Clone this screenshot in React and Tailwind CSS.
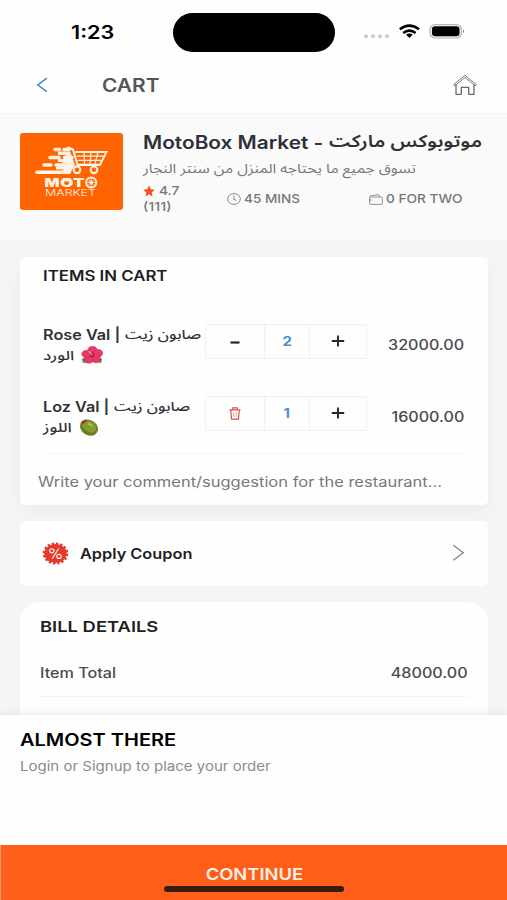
import clsx from 'clsx';

const items = [
  { id: 1, name: 'Rose Val |', nameAr: 'صابون زيت', kind: 'الورد', emoji: 'flower', qty: 2, price: '32000.00' },
  { id: 2, name: 'Loz Val |', nameAr: 'صابون زيت', kind: 'اللوز', emoji: 'olive', qty: 1, price: '16000.00' },
];

// wide text: the glyphs are stretched, the box keeps its natural width
const Wide = ({ className, children }) => (
  <span className={clsx('inline-block whitespace-nowrap', className)}>{children}</span>
);

const StatusBar = () => (
  <div className="flex h-16 shrink-0 items-center">
    <div className="w-[173px] pl-[71px] text-[18px] font-semibold text-black">
      <Wide className="origin-left scale-x-[1.2]">1:23</Wide>
    </div>
    <div className="h-[39px] w-[162px] rounded-full bg-black" />
    <svg className="ml-[28px]" width="102" height="20" viewBox="0 0 102 20">
      <g fill="#c9c9c9">
        <circle cx="3" cy="14.2" r="2" />
        <circle cx="10" cy="14.2" r="2" />
        <circle cx="17" cy="14.2" r="2" />
        <circle cx="24" cy="14.2" r="2" />
      </g>
      <g fill="none" stroke="#000" strokeWidth="2.5">
        <path d="M36.8 7.3Q46.4 -.1 56 7.3" />
        <path d="M40.2 10.9Q46.4 6.4 52.6 10.9" />
      </g>
      <path d="M43 12.5Q46.4 10.7 49.8 12.5L46.4 16Z" />
      <rect x="67" y="2.5" width="31.5" height="13.5" rx="5" fill="#eee" stroke="#b5b5b5" strokeWidth="1.2" />
      <rect x="69" y="4.3" width="27.5" height="10" rx="3.2" />
      <path d="M100 7.5Q102 9.2 100 11Z" fill="#777" />
    </svg>
  </div>
);

const Header = () => (
  <div className="flex h-[50px] shrink-0 items-center border-b border-[#f3f3f3] pb-[7px]">
    <svg className="ml-[36px]" width="12" height="16" viewBox="0 0 12 16" fill="none" stroke="#3b8ac4" strokeWidth="1.5">
      <path d="M10.8 1.2L1.8 8L10.8 14.6" />
    </svg>
    <div className="ml-[54px] flex-1 text-[18px] font-semibold text-[#555]">
      <Wide className="origin-left scale-x-[1.16]">CART</Wide>
    </div>
    <svg className="mr-[29px]" width="26" height="22" viewBox="0 0 26 22" fill="none" stroke="#6b6b6b" strokeWidth="1.3" strokeLinejoin="round">
      <path d="M1.5 10.7L13 1.3L24.5 10.7L23 11.6L13 3.5L3 11.6Z" strokeWidth=".9" />
      <path d="M4 10.5V20.3H9.3V13.3H16.7V20.3H22V10.5" />
    </svg>
  </div>
);

const Logo = () => (
  <svg className="shrink-0 rounded-[3px]" width="103" height="77" viewBox="0 0 103 77">
    <rect width="103" height="77" fill="#ff6400" />
    <g fill="none" stroke="#fff3e6" strokeLinecap="round">
      <path d="M35 16.5H39.5M44 16.5H49" strokeWidth="3.4" />
      <path d="M30 24.5H39M44.5 24.5H52" strokeWidth="3.4" />
      <path d="M24 32H31M36 32H50" strokeWidth="3.4" />
      <path d="M17 39.2H49" strokeWidth="3.4" />
      <path d="M48 14.5L53 16.5L57.5 32H79" strokeWidth="2" />
      <path d="M56 19H86.5L80 31.8H58" strokeWidth="1.9" />
      <path d="M57 23.2H83.5M58 27.4H81.5M64 19L64.5 31M71 19L70 31M78 19L75 31" strokeWidth="1.2" />
    </g>
    <path d="M38 18.5H50L55 32L52 37L50 41H38L44 36.5H36V33.5H46L42 29H38V26H44L46 22H38Z" fill="#fff3e6" />
    <circle cx="57" cy="36.8" r="3.3" fill="#ff6400" stroke="#fff3e6" strokeWidth="2.1" />
    <circle cx="74" cy="36.8" r="3.3" fill="#ff6400" stroke="#fff3e6" strokeWidth="2.1" />
    <g fill="#fff3e6" fontFamily="Inter, sans-serif">
      <text x="24.5" y="53.7" fontSize="12" fontWeight="900" textLength="15" lengthAdjust="spacingAndGlyphs">M</text>
      <text x="40" y="53.7" fontSize="12" fontWeight="900" textLength="13.5" lengthAdjust="spacingAndGlyphs">O</text>
      <text x="53" y="53.7" fontSize="12" fontWeight="900" textLength="11.5" lengthAdjust="spacingAndGlyphs">T</text>
      <text x="25" y="63" fontSize="9.3" fontWeight="300" textLength="51" lengthAdjust="spacingAndGlyphs">MARKET</text>
    </g>
    <path d="M42.8 45H50.8V48.5H42.8Z" fill="#fff3e6" />
    <g fill="none" stroke="#fff3e6">
      <circle cx="71.2" cy="49.5" r="5.1" strokeWidth="2" />
      <path d="M67 49.5H75.4M71.2 45.3V53.7M68.2 46.5L74.2 52.5M74.2 46.5L68.2 52.5" strokeWidth=".8" />
      <circle cx="71.2" cy="49.5" r="1.3" fill="#fff3e6" />
    </g>
  </svg>
);

const Restaurant = () => (
  <div className="flex h-[127px] shrink-0 bg-[#fafafa] pl-5 pt-[19px]">
    <Logo />
    <div className="ml-5 flex-1">
      <div className="flex h-[19px] items-center text-[18px] font-semibold text-[#2f3035]">
        <div className="w-[186px]">
          <Wide className="origin-left scale-x-[1.155]">MotoBox Market -</Wide>
        </div>
        <Wide className="origin-left scale-x-[1.19] font-['Noto_Sans_Arabic','DejaVu_Sans',sans-serif] text-[17px]">موتوبوكس ماركت</Wide>
      </div>
      <div className="mt-[7px] h-[18px] text-[13px] leading-[18px] text-[#74757b]">
        <Wide className="origin-left scale-x-[1.195] font-['Noto_Sans_Arabic','DejaVu_Sans',sans-serif]">تسوق جميع ما يحتاجه المنزل من سنتر النجار</Wide>
      </div>
      <div className="mt-[6px] flex text-[12px] font-medium leading-4 text-[#75767a]">
        <div className="w-[84px]">
          <div className="flex items-center">
            <svg width="12" height="12" viewBox="0 0 24 24" fill="#f4511e">
              <path d="M12 1L15.4 8.6L23.5 9.4L17.4 14.8L19.2 23L12 18.7L4.8 23L6.6 14.8L.5 9.4L8.6 8.6Z" />
            </svg>
            <Wide className="ml-1 origin-left scale-x-[1.15]">4.7</Wide>
          </div>
          <Wide className="origin-left scale-x-[1.2]">(111)</Wide>
        </div>
        <div className="mt-2 flex h-4 w-[142px] items-center">
          <svg width="14" height="12" viewBox="0 0 14 12" fill="none" stroke="#85868a">
            <ellipse cx="7" cy="6" rx="6.3" ry="5.4" />
            <path d="M7 2.5V6.3L9.5 7.5" />
          </svg>
          <Wide className="ml-[3px] origin-left scale-x-[1.13]">45 MINS</Wide>
        </div>
        <div className="mt-2 flex h-4 items-center">
          <svg width="14" height="11" viewBox="0 0 14 11" fill="none" stroke="#85868a" strokeWidth=".9">
            <path d="M.6 3V9Q.6 10.4 2 10.4H12Q13.4 10.4 13.4 9V4.3Q13.4 3 12 3H2Q.6 3 1 2L9.5 .6L11 3M.6 6H3" />
          </svg>
          <Wide className="ml-[3px] origin-left scale-x-[1.14]">0 FOR TWO</Wide>
        </div>
      </div>
    </div>
  </div>
);

const Flower = () => (
  <svg width="22" height="18" viewBox="0 0 22 18">
    <path d="M1 13L6 10L8 16L2 17ZM21 13L16 10L15 16L20 17Z" fill="#4f8a3c" />
    <g fill="#e83a66" stroke="#c42a55" strokeWidth=".5">
      <ellipse cx="11.5" cy="4.2" rx="4.6" ry="4" />
      <ellipse cx="17" cy="7.2" rx="4.5" ry="3.7" />
      <ellipse cx="15" cy="13" rx="4.3" ry="3.8" />
      <ellipse cx="8" cy="13.4" rx="4.3" ry="3.8" />
      <ellipse cx="5.3" cy="8" rx="4.6" ry="3.7" />
    </g>
    <circle cx="11" cy="9" r="2.2" fill="#a3123a" />
    <path d="M11 9L8 5.5" stroke="#ff9d8a" strokeWidth="1.2" strokeLinecap="round" />
  </svg>
);

const Olive = () => (
  <svg width="20" height="17" viewBox="0 0 20 17">
    <ellipse cx="10" cy="8.6" rx="9.4" ry="7.6" transform="rotate(32 10 8.6)" fill="#66801f" />
    <ellipse cx="10.3" cy="7.6" rx="7.5" ry="5.4" transform="rotate(32 10.3 7.6)" fill="#839c30" />
    <ellipse cx="11.5" cy="5.8" rx="3" ry="1.2" transform="rotate(30 11.5 5.8)" fill="#a9bd55" />
    <ellipse cx="4.8" cy="2.8" rx="3.2" ry="1.5" transform="rotate(-22 4.8 2.8)" fill="#a63a20" />
  </svg>
);

const Plus = () => (
  <svg width="14" height="12" viewBox="0 0 14 12" stroke="#25262b" strokeWidth="1.9">
    <path d="M.8 6H13.2M7 .5V11.5" />
  </svg>
);

const Minus = () => (
  <svg width="10" height="4" viewBox="0 0 10 4" stroke="#25262b" strokeWidth="2.2">
    <path d="M.5 2.5H9.5" />
  </svg>
);

const Trash = () => (
  <svg width="12" height="13" viewBox="0 0 12 13" fill="none" stroke="#d9534a" strokeWidth="1.2">
    <path d="M.5 2.8H11.5M3.7 2.6V.8H8.3V2.6M1.7 3L2.6 12.2H9.4L10.3 3" />
    <path d="M4.6 5L4.8 10M7.4 5L7.2 10" strokeWidth=".5" />
  </svg>
);

const CartItem = ({ item }) => (
  <div className="flex h-[72px]">
    <div className="w-[163px] pt-px text-[14px] font-medium leading-5 text-[#303138]">
      <div className="flex h-5 items-center">
        <div className={item.id === 1 ? 'w-[82px]' : 'w-[71px]'}>
          <Wide className="origin-left scale-x-[1.16] font-semibold">{item.name}</Wide>
        </div>
        <Wide className="origin-left scale-x-[1.24] font-['Noto_Sans_Arabic','DejaVu_Sans',sans-serif] text-[13px]">{item.nameAr}</Wide>
      </div>
      <div className="flex h-5 items-center">
        <div className={item.id === 1 ? 'w-[38px]' : 'w-[36px]'}>
          <Wide className="origin-left scale-x-[1.3] font-['Noto_Sans_Arabic','DejaVu_Sans',sans-serif] text-[13px]">{item.kind}</Wide>
        </div>
        {item.emoji === 'flower' ? <Flower /> : <Olive />}
      </div>
    </div>
    <div className="-ml-px flex h-[35px] w-[162px] border border-[#f1f1f1]">
      <button className="flex w-[59px] items-center justify-center border-r border-[#f1f1f1]">
        {item.qty > 1 ? <Minus /> : <Trash />}
      </button>
      <div className="flex w-[45px] items-center justify-center border-r border-[#f1f1f1] text-[13px] font-bold text-[#4a90c8]">
        <Wide className="scale-x-[1.15]">{item.qty}</Wide>
      </div>
      <button className="flex flex-1 items-center justify-center pb-[2px]">
        <Plus />
      </button>
    </div>
    <div className="flex-1 pt-[10px] text-right text-[14px] font-medium leading-[21px] text-[#4a4b50]">
      <Wide className="origin-right scale-x-[1.15]">{item.price}</Wide>
    </div>
  </div>
);

const Cart = () => (
  <div className="h-[248px] shrink-0 rounded-[5px] bg-[#fefefe] pl-[23px] pr-6 shadow-[0_8px_18px_rgba(0,0,0,0.04)]">
    <h2 className="h-[42px] border-b border-[#fafafa] pt-[9px] text-[14px] font-semibold leading-5 text-[#1e1f23]">
      <Wide className="origin-left scale-x-[1.2]">ITEMS IN CART</Wide>
    </h2>
    <div className="h-[155px] border-b border-[#f5f5f5] pt-[25px]">
      {items.map((item) => (
        <CartItem key={item.id} item={item} />
      ))}
    </div>
    <div className="-ml-[5px] pt-[18px] text-[14px] leading-5 text-[#77787b]">
      <Wide className="origin-left scale-x-[1.178]">Write your comment/suggestion for the restaurant...</Wide>
    </div>
  </div>
);

const Coupon = () => (
  <div className="mt-4 flex h-[65px] shrink-0 items-center rounded-[5px] bg-[#fefefe] px-[22px]">
    <svg width="27" height="23" viewBox="0 0 27 23">
      <g fill="#e43b31">
        <ellipse cx="13.5" cy="11.5" rx="11.2" ry="9.6" />
        <ellipse cx="13.5" cy="11.5" rx="11.5" ry="9.8" fill="none" stroke="#e43b31" strokeWidth="2.6" strokeDasharray="2.4 1.8" />
      </g>
      <g fill="none" stroke="#ffe7e2" strokeWidth="1.2">
        <ellipse cx="9.8" cy="8.8" rx="2.2" ry="2" />
        <ellipse cx="17" cy="14.4" rx="2.2" ry="2" />
        <path d="M16.8 6.5L10.2 16.7" />
      </g>
    </svg>
    <div className="ml-[11px] flex-1 text-[14px] font-semibold text-[#1e1f23]">
      <Wide className="origin-left scale-x-[1.165]">Apply Coupon</Wide>
    </div>
    <svg className="mr-px -mt-[2px]" width="13" height="18" viewBox="0 0 13 18" fill="none" stroke="#858585" strokeWidth="1.3">
      <path d="M1.3 1.3L11.3 8.7L1.3 16.3" />
    </svg>
  </div>
);

const Bill = () => (
  <div className="mt-4 h-[160px] shrink-0 rounded-t-[20px] bg-[#fefefe] px-5 pt-[15px] leading-5">
    <h2 className="text-[15px] font-semibold text-[#1e1f23]">
      <Wide className="origin-left scale-x-[1.225]">BILL DETAILS</Wide>
    </h2>
    <div className="mt-[16px] flex h-[44px] justify-between border-b border-[#f3f3f3] pt-[10px] text-[14px] font-medium text-[#4a4b50]">
      <Wide className="origin-left scale-x-[1.155]">Item Total</Wide>
      <Wide className="origin-right scale-x-[1.155]">48000.00</Wide>
    </div>
  </div>
);

const Checkout = () => (
  <div className="z-10 h-[185px] shrink-0 bg-[#fefefe] shadow-[0_-2px_6px_rgba(0,0,0,0.07)]">
    <div className="h-[130px] pl-5 pt-[14px]">
      <div className="text-[17px] font-semibold leading-[22px] text-black">
        <Wide className="origin-left scale-x-[1.175]">ALMOST THERE</Wide>
      </div>
      <div className="mt-[5px] text-[13px] leading-5 text-[#8a8b8f]">
        <Wide className="origin-left scale-x-[1.155]">Login or Signup to place your order</Wide>
      </div>
    </div>
    <button className="flex h-[55px] w-full flex-col items-center border-l border-[#ff9a6c] bg-[#ff5f1b] pt-[18px] text-[16px] font-semibold leading-[22px] text-[#fff0e4]">
      <Wide className="scale-x-[1.15]">CONTINUE</Wide>
      <span className="mt-[1px] h-[6px] w-[180px] rounded-full bg-[#3a1b12]" />
    </button>
  </div>
);

const App = () => {
  return (
    <div className="flex h-[900px] w-[507px] flex-col overflow-hidden bg-[#fefefe] font-['Inter','Noto_Sans_Arabic','DejaVu_Sans',sans-serif]">
      <StatusBar />
      <Header />
      <Restaurant />
      <div className="flex min-h-0 flex-1 flex-col overflow-hidden bg-[#f5f5f5] px-5 pr-[19px] pt-4">
        <Cart />
        <Coupon />
        <Bill />
      </div>
      <Checkout />
    </div>
  );
};

export default App;
